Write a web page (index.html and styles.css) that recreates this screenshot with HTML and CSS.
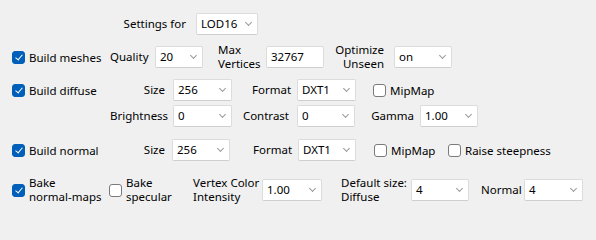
FILE: index.html
```html
<!DOCTYPE html>
<html>
<head>
<meta charset="utf-8">
<link rel="stylesheet" href="styles.css">
</head>
<body>
<div class="panel">
  <div class="row r0">
    <span class="lbl right w-settings">Settings for</span>
    <div class="combo w62 ml10"><span>LOD16</span><i class="chev"></i></div>
  </div>

  <div class="row r1">
    <label class="cb ml12 w98"><span class="box on"></span><span>Build meshes</span></label>
    <span class="lbl w45">Quality</span>
    <div class="combo w48"><span>20</span><i class="chev"></i></div>
    <span class="lbl two ml15 w48">Max<br>Vertices</span>
    <div class="edit w58"><span>32767</span></div>
    <span class="lbl two right w70 pr10">Optimize<br>Unseen</span>
    <div class="combo w58"><span>on</span><i class="chev"></i></div>
  </div>

  <div class="row r2">
    <label class="cb ml12 w98"><span class="box on"></span><span>Build diffuse</span></label>
    <span class="lbl right w55">Size</span>
    <div class="combo w59 ml8"><span>256</span><i class="chev"></i></div>
    <span class="lbl ml20 w45">Format</span>
    <div class="combo w59"><span>DXT1</span><i class="chev"></i></div>
    <label class="cb ml17"><span class="box"></span><span>MipMap</span></label>
  </div>

  <div class="row r3">
    <span class="lbl right ml110 w55">Brightness</span>
    <div class="combo w59 ml8"><span>0</span><i class="chev"></i></div>
    <span class="lbl right w65 pr8">Contrast</span>
    <div class="combo w58"><span>0</span><i class="chev"></i></div>
    <span class="lbl right w65 pr6">Gamma</span>
    <div class="combo w58"><span>1.00</span><i class="chev"></i></div>
  </div>

  <div class="row r4">
    <label class="cb ml12 w98"><span class="box on"></span><span>Build normal</span></label>
    <span class="lbl right w55">Size</span>
    <div class="combo w58 ml7"><span>256</span><i class="chev"></i></div>
    <span class="lbl ml23 w45">Format</span>
    <div class="combo w58"><span>DXT1</span><i class="chev"></i></div>
    <label class="cb ml18 w74"><span class="box"></span><span>MipMap</span></label>
    <label class="cb"><span class="box"></span><span>Raise steepness</span></label>
  </div>

  <div class="row r5">
    <label class="cb ml12 w97"><span class="box on"></span><span class="two">Bake<br>normal-maps</span></label>
    <label class="cb w84"><span class="box"></span><span class="two">Bake<br>specular</span></label>
    <span class="lbl two w69">Vertex Color<br>Intensity</span>
    <div class="combo w60"><span>1.00</span><i class="chev"></i></div>
    <span class="lbl two ml19 w70">Default size:<br>Diffuse</span>
    <div class="combo w58"><span>4</span><i class="chev"></i></div>
    <span class="lbl ml12 w43">Normal</span>
    <div class="combo w59"><span>4</span><i class="chev"></i></div>
  </div>
</div>
</body>
</html>
```

FILE: styles.css
```css
html, body {
  margin: 0;
  padding: 0;
  background: #f0f0f0;
}
body {
  width: 596px;
  height: 217px;
  overflow: hidden;
  font-family: "Noto Sans", "Open Sans", sans-serif;
  font-size: 11.5px;
  color: #000;
}
.panel {
  padding-top: 13px;
}
.row {
  display: flex;
  align-items: center;
  height: 22px;
}
.r1 { margin-top: 11px; }
.r2 { margin-top: 11px; }
.r3 { margin-top: 4px; }
.r4 { margin-top: 12px; }
.r5 { margin-top: 18px; }

.lbl {
  flex: none;
  white-space: nowrap;
  line-height: 14px;
}
.two { line-height: 14px; }
.right { text-align: right; }
.w-settings { margin-left: 100px; width: 86px; }

.combo, .edit {
  flex: none;
  box-sizing: border-box;
  height: 22px;
  background: #fff;
  border: 1px solid #dcdcdc;
  border-bottom-color: #cfcfcf;
  border-radius: 2px;
  display: flex;
  align-items: center;
  padding-left: 4px;
  position: relative;
}
.combo span, .edit span { line-height: 20px; }
.chev {
  position: absolute;
  right: 6px;
  top: 6px;
  width: 4px;
  height: 4px;
  border-right: 1px solid #9a9a9a;
  border-bottom: 1px solid #9a9a9a;
  transform: rotate(45deg);
}

.cb {
  flex: none;
  display: flex;
  align-items: center;
  white-space: nowrap;
}
.box {
  flex: none;
  box-sizing: border-box;
  width: 13px;
  height: 13px;
  border: 1px solid #7a7a7a;
  border-radius: 3px;
  background: #fff;
  margin-right: 4px;
  position: relative;
}
.box.on {
  background: #005fb8;
  border-color: #005fb8;
}
.box.on::after {
  content: "";
  position: absolute;
  left: 3.5px;
  top: 1px;
  width: 3px;
  height: 6px;
  border-right: 1.5px solid #fff;
  border-bottom: 1.5px solid #fff;
  transform: rotate(40deg);
}

.ml7 { margin-left: 7px; }
.ml8 { margin-left: 8px; }
.ml10 { margin-left: 10px; }
.ml12 { margin-left: 12px; }
.ml15 { margin-left: 15px; }
.ml17 { margin-left: 17px; }
.ml18 { margin-left: 18px; }
.ml19 { margin-left: 19px; }
.ml20 { margin-left: 20px; }
.ml23 { margin-left: 23px; }
.ml110 { margin-left: 110px; }
.pr6 { padding-right: 6px; box-sizing: border-box; }
.pr8 { padding-right: 8px; box-sizing: border-box; }
.pr10 { padding-right: 10px; box-sizing: border-box; }

.w43 { width: 43px; }
.w45 { width: 45px; }
.w48 { width: 48px; }
.w55 { width: 55px; }
.w58 { width: 58px; }
.w59 { width: 59px; }
.w60 { width: 60px; }
.w62 { width: 62px; }
.w65 { width: 65px; }
.w69 { width: 69px; }
.w70 { width: 70px; }
.w74 { width: 74px; }
.w84 { width: 84px; }
.w97 { width: 97px; }
.w98 { width: 98px; }
```
